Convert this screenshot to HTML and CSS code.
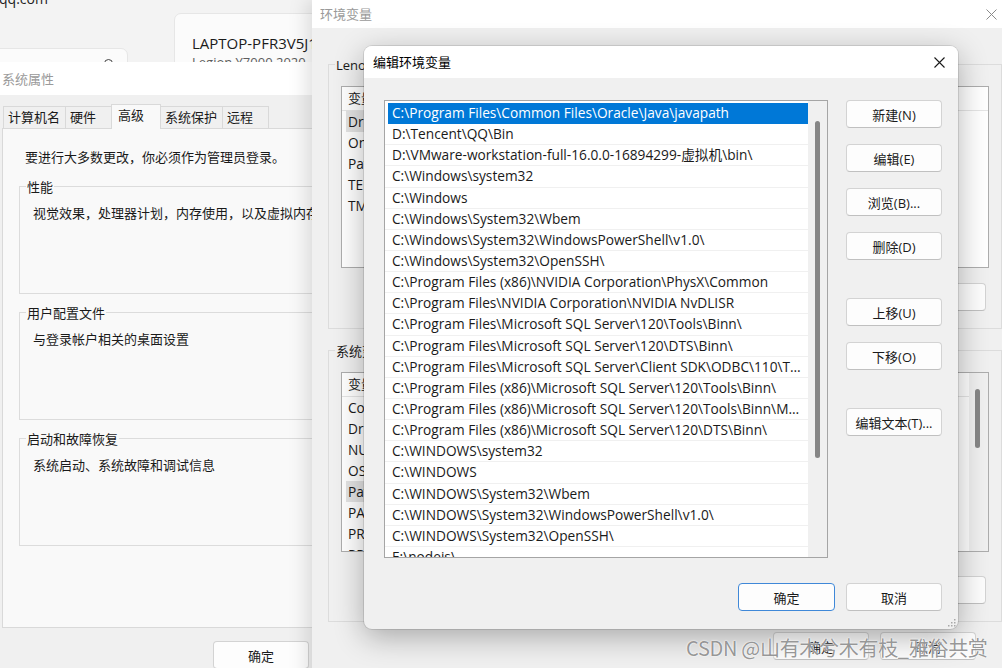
FILE: index.html
```html
<!DOCTYPE html>
<html lang="zh-CN">
<head>
    <meta charset="UTF-8">
    <meta name="viewport" content="width=device-width, initial-scale=1.0">
    <title>编辑环境变量</title>
    <link rel="stylesheet" href="styles.css">
</head>
<body>
<div class="desk">

    <!-- settings app behind everything -->
    <div class="settings">
        <div class="site">qq.com</div>
        <div class="cards">
            <div class="card card-small"><span class="card-icon"></span></div>
            <div class="card card-device">
                <div class="device-name">LAPTOP-PFR3V5J1</div>
                <div class="device-model">Legion Y7000 2020</div>
            </div>
        </div>
    </div>

    <!-- 系统属性 -->
    <div class="win sysprops">
        <div class="titlebar"><span class="title">系统属性</span></div>
        <div class="sys-body">
            <div class="tabs">
                <div class="tab">计算机名</div>
                <div class="tab">硬件</div>
                <div class="tab active">高级</div>
                <div class="tab">系统保护</div>
                <div class="tab">远程</div>
            </div>
            <div class="tabpanel">
                <p class="note">要进行大多数更改，你必须作为管理员登录。</p>
                <div class="group">
                    <div class="group-label">性能</div>
                    <p class="group-text">视觉效果，处理器计划，内存使用，以及虚拟内存</p>
                </div>
                <div class="group">
                    <div class="group-label">用户配置文件</div>
                    <p class="group-text">与登录帐户相关的桌面设置</p>
                </div>
                <div class="group">
                    <div class="group-label">启动和故障恢复</div>
                    <p class="group-text">系统启动、系统故障和调试信息</p>
                </div>
            </div>
            <div class="actions">
                <button class="btn">确定</button>
                <button class="btn">取消</button>
                <button class="btn">应用(A)</button>
            </div>
        </div>
    </div>

    <!-- 环境变量 -->
    <div class="win envvars">
        <div class="titlebar">
            <span class="title">环境变量</span>
            <svg class="close close-dim" width="11" height="11" viewBox="0 0 11 11"><path d="M0.5 0.5L10.5 10.5M10.5 0.5L0.5 10.5" stroke="#8a8a8a" stroke-width="1"/></svg>
        </div>
        <div class="env-body">
            <div class="env-group">
                <div class="group-label">Lenovo 的用户变量(U)</div>
                <div class="varlist varlist-user">
                    <div class="var-table">
                        <div class="var-head"><span class="col-name">变量</span><span class="col-val">值</span></div>
                        <div class="var-row"><span class="col-name"><span class="hl">DriverData</span></span><span class="col-val">C:\Windows\System32\Drivers\DriverData</span></div>
                        <div class="var-row"><span class="col-name">OneDrive</span><span class="col-val">C:\Users\Lenovo\OneDrive</span></div>
                        <div class="var-row"><span class="col-name">Path</span><span class="col-val">C:\Users\Lenovo\AppData\Local\Microsoft</span></div>
                        <div class="var-row"><span class="col-name">TEMP</span><span class="col-val">%USERPROFILE%\AppData\Local\Temp</span></div>
                        <div class="var-row"><span class="col-name">TMP</span><span class="col-val">%USERPROFILE%\AppData\Local\Temp</span></div>
                    </div>
                </div>
                <div class="group-btns">
                    <button class="btn">新建(N)...</button>
                    <button class="btn">编辑(E)...</button>
                    <button class="btn">删除(D)</button>
                </div>
            </div>
            <div class="env-group env-group-sys">
                <div class="group-label">系统变量(S)</div>
                <div class="varlist varlist-sys">
                    <div class="var-table">
                        <div class="var-head"><span class="col-name">变量</span><span class="col-val">值</span></div>
                        <div class="var-row"><span class="col-name">ComSpec</span><span class="col-val">C:\WINDOWS\system32\cmd.exe</span></div>
                        <div class="var-row"><span class="col-name">DriverData</span><span class="col-val">C:\Windows\System32\Drivers</span></div>
                        <div class="var-row"><span class="col-name">NUMBER_OF_PROCESSORS</span><span class="col-val">12</span></div>
                        <div class="var-row"><span class="col-name">OS</span><span class="col-val">Windows_NT</span></div>
                        <div class="var-row"><span class="col-name"><span class="hl">Path</span></span><span class="col-val">C:\Program Files\Common Files</span></div>
                        <div class="var-row"><span class="col-name">PATHEXT</span><span class="col-val">.COM;.EXE;.BAT;.CMD;.VBS</span></div>
                        <div class="var-row"><span class="col-name">PROCESSOR_ARCHITECTURE</span><span class="col-val">AMD64</span></div>
                        <div class="var-row"><span class="col-name">PROCESSOR_IDENTIFIER</span><span class="col-val">Intel64 Family 6</span></div>
                    </div>
                    <div class="vscroll vscroll-sys"><div class="thumb"></div></div>
                </div>
                <div class="group-btns">
                    <button class="btn">新建(W)...</button>
                    <button class="btn">编辑(I)...</button>
                    <button class="btn">删除(L)</button>
                </div>
            </div>
            <div class="env-actions">
                <button class="btn">确定</button>
                <button class="btn">取消</button>
            </div>
        </div>
    </div>

    <!-- 编辑环境变量 -->
    <div class="dialog">
        <div class="titlebar">
            <span class="title">编辑环境变量</span>
            <svg class="close" width="11" height="11" viewBox="0 0 11 11"><path d="M0.5 0.5L10.5 10.5M10.5 0.5L0.5 10.5" stroke="#1a1a1a" stroke-width="1.1"/></svg>
        </div>
        <div class="dlg-body">
            <div class="pathlist">
                <div class="path-rows">
                    <div class="path-row sel">C:\Program Files\Common Files\Oracle\Java\javapath</div>
                    <div class="path-row">D:\Tencent\QQ\Bin</div>
                    <div class="path-row">D:\VMware-workstation-full-16.0.0-16894299-虚拟机\bin\</div>
                    <div class="path-row">C:\Windows\system32</div>
                    <div class="path-row">C:\Windows</div>
                    <div class="path-row">C:\Windows\System32\Wbem</div>
                    <div class="path-row">C:\Windows\System32\WindowsPowerShell\v1.0\</div>
                    <div class="path-row">C:\Windows\System32\OpenSSH\</div>
                    <div class="path-row">C:\Program Files (x86)\NVIDIA Corporation\PhysX\Common</div>
                    <div class="path-row">C:\Program Files\NVIDIA Corporation\NVIDIA NvDLISR</div>
                    <div class="path-row">C:\Program Files\Microsoft SQL Server\120\Tools\Binn\</div>
                    <div class="path-row">C:\Program Files\Microsoft SQL Server\120\DTS\Binn\</div>
                    <div class="path-row">C:\Program Files\Microsoft SQL Server\Client SDK\ODBC\110\Tools\Binn\</div>
                    <div class="path-row">C:\Program Files (x86)\Microsoft SQL Server\120\Tools\Binn\</div>
                    <div class="path-row">C:\Program Files (x86)\Microsoft SQL Server\120\Tools\Binn\ManagementStudio\</div>
                    <div class="path-row">C:\Program Files (x86)\Microsoft SQL Server\120\DTS\Binn\</div>
                    <div class="path-row">C:\WINDOWS\system32</div>
                    <div class="path-row">C:\WINDOWS</div>
                    <div class="path-row">C:\WINDOWS\System32\Wbem</div>
                    <div class="path-row">C:\WINDOWS\System32\WindowsPowerShell\v1.0\</div>
                    <div class="path-row">C:\WINDOWS\System32\OpenSSH\</div>
                    <div class="path-row">E:\nodejs\</div>
                </div>
                <div class="vscroll"><div class="thumb thumb-long"></div></div>
            </div>
            <div class="btn-col">
                <button class="btn">新建(N)</button>
                <button class="btn">编辑(E)</button>
                <button class="btn">浏览(B)...</button>
                <button class="btn">删除(D)</button>
                <button class="btn btn-sep">上移(U)</button>
                <button class="btn">下移(O)</button>
                <button class="btn btn-sep">编辑文本(T)...</button>
            </div>
        </div>
        <div class="dlg-actions">
            <button class="btn btn-default">确定</button>
            <button class="btn">取消</button>
        </div>
        <svg class="grip" width="8" height="8" viewBox="0 0 8 8" fill="#a8a8a8">
            <rect x="6" y="0" width="1.5" height="1.5"/>
            <rect x="3" y="3" width="1.5" height="1.5"/><rect x="6" y="3" width="1.5" height="1.5"/>
            <rect x="0" y="6" width="1.5" height="1.5"/><rect x="3" y="6" width="1.5" height="1.5"/><rect x="6" y="6" width="1.5" height="1.5"/>
        </svg>
    </div>

    <div class="watermark">CSDN @山有木兮木有枝_雅俗共赏</div>
</div>
</body>
</html>
```

FILE: styles.css
```css
* {
    box-sizing: border-box;
}

body {
    margin: 0;
    font-family: "Open Sans", "Noto Sans CJK SC", sans-serif;
    font-size: 13px;
    color: #1a1a1a;
}

.desk {
    position: relative;
    width: 1002px;
    height: 668px;
    overflow: hidden;
    background: #f3f3f3;
}

/* settings app in the back */
.site {
    margin: -10px 0 0 -1px;
    font-size: 14px;
    line-height: 18px;
    color: #222;
}

.cards {
    display: flex;
    align-items: flex-start;
    gap: 46px;
    margin-left: -10px;
}

.card {
    background: #fbfbfb;
    border: 1px solid #e6e6e6;
    border-radius: 7px;
}

.card-small {
    width: 138px;
    height: 60px;
    margin-top: 40px;
    display: flex;
    justify-content: flex-end;
    padding: 10px 14px 0 0;
}

.card-icon {
    width: 9px;
    height: 9px;
    border: 1.5px solid #444;
    border-radius: 50%;
}

.card-device {
    width: 260px;
    height: 80px;
    margin-top: 5px;
    padding: 19px 17px;
}

.device-name {
    font-size: 15px;
    line-height: 20px;
    color: #1b1b1b;
}

.device-model {
    font-size: 13px;
    line-height: 18px;
    color: #5d5d5d;
}

/* windows */
.win {
    position: absolute;
    background: #f0f0f0;
}

.titlebar {
    background: #fff;
    display: flex;
    align-items: center;
    justify-content: space-between;
}

.title {
    font-family: "Noto Sans CJK SC", sans-serif;
    font-size: 13px;
    line-height: 18px;
    color: #9a9a9a;
}

.close {
    display: block;
}

.btn {
    height: 28px;
    width: 96px;
    padding: 0;
    background: #fdfdfd;
    border: 1px solid #d3d3d3;
    border-bottom-color: #c0c0c0;
    border-radius: 4px;
    font-family: "Open Sans", "Noto Sans CJK SC", sans-serif;
    font-size: 13px;
    color: #1a1a1a;
}

.group-label {
    width: fit-content;
    margin: -9px 0 0 -7px;
    padding: 0 1px;
    line-height: 18px;
    font-family: "Open Sans", "Noto Sans CJK SC", sans-serif;
}

/* 系统属性 */
.sysprops {
    left: -8px;
    top: 62px;
    width: 535px;
    height: 620px;
}

.sysprops .titlebar {
    height: 33px;
    padding-left: 10px;
}

.sys-body {
    padding: 9px 10px 0 10px;
}

.tabs {
    display: flex;
    align-items: flex-end;
    height: 24px;
    padding-left: 1px;
}

.tab {
    height: 22px;
    line-height: 20px;
    min-width: 47px;
    padding: 0 5px 0 4px;
    border: 1px solid #d9d9d9;
    border-bottom: none;
    margin-right: -1px;
    background: #f0f0f0;
    font-family: "Noto Sans CJK SC", sans-serif;
}

.tab.active {
    height: 25px;
    min-width: 50px;
    padding-left: 6px;
    margin-bottom: -1px;
    background: #f9f9f9;
    position: relative;
    z-index: 1;
}

.tabpanel {
    height: 500px;
    background: #f9f9f9;
    border: 1px solid #d9d9d9;
    padding: 19px 16px 0 16px;
}

.note {
    margin: 0 0 20px 6px;
    line-height: 18px;
    font-family: "Noto Sans CJK SC", sans-serif;
}

.group {
    height: 108px;
    border: 1px solid #dcdcdc;
    padding: 0 13px;
    margin-bottom: 18px;
}

.group .group-label {
    background: #f9f9f9;
}

.group-text {
    margin: 8px 0 0 0;
    line-height: 18px;
    white-space: nowrap;
    font-family: "Noto Sans CJK SC", sans-serif;
}

.actions {
    display: flex;
    justify-content: flex-end;
    gap: 8px;
    margin-top: 13px;
}

/* 环境变量 */
.envvars {
    left: 312px;
    top: 0;
    width: 700px;
    height: 700px;
    box-shadow: -5px 0 18px rgba(0, 0, 0, 0.13);
}

.envvars .titlebar {
    height: 28px;
    padding: 0 15px 0 8px;
}

.env-body {
    padding: 36px 10px 0 16px;
}

.env-group {
    border: 1px solid #dcdcdc;
    padding: 0 12px 17px 12px;
}

.env-group .group-label {
    background: #f0f0f0;
    margin-left: -6px;
}

.env-group-sys {
    margin-top: 21px;
}

.varlist {
    display: flex;
    margin-top: 12px;
    background: #fff;
    border: 1px solid #adadad;
    overflow: hidden;
    font-size: 13.7px;
}

.varlist-user {
    height: 182px;
}

.varlist-sys {
    height: 180px;
}

.var-table {
    flex: 1;
}

.var-head,
.var-row {
    display: flex;
    white-space: nowrap;
}

.var-head {
    height: 24px;
    line-height: 22px;
    border-bottom: 1px solid #e5e5e5;
    font-size: 13px;
}

.var-head .col-name {
    border-right: 1px solid #e5e5e5;
    font-family: "Noto Sans CJK SC", sans-serif;
}

.var-head .col-val {
    font-family: "Noto Sans CJK SC", sans-serif;
}

.var-row {
    height: 21px;
    line-height: 21px;
    margin-left: 4px;
}

.hl {
    display: inline-block;
    padding: 0 2px;
    background: #e3e3e3;
}

.col-name {
    width: 190px;
    padding-left: 6px;
    overflow: hidden;
}

.var-row .col-name {
    padding-left: 0;
}

.var-row .col-name:not(:has(.hl)) {
    padding-left: 2px;
}

.col-val {
    padding-left: 8px;
}

.group-btns {
    display: flex;
    justify-content: flex-end;
    gap: 10px;
    margin-top: 15px;
    padding-right: 3px;
}

.group-btns .btn {
    width: 108px;
}

.env-group-sys .group-btns {
    margin-top: 24px;
}

.env-actions {
    display: flex;
    justify-content: flex-end;
    gap: 11px;
    margin: 10px 26px 0 0;
}

/* 编辑环境变量 */
.dialog {
    position: absolute;
    left: 364px;
    top: 46px;
    width: 594px;
    height: 583px;
    background: #f0f0f0;
    border-radius: 8px;
    overflow: hidden;
    box-shadow: 0 8px 30px rgba(0, 0, 0, 0.3), 0 0 0 1px rgba(0, 0, 0, 0.1);
}

.dialog .titlebar {
    height: 32px;
    padding: 0 13px 0 9px;
}

.dialog .title {
    color: #000;
}

.dlg-body {
    display: flex;
    gap: 18px;
    padding: 22px 16px 0 20px;
}

.pathlist {
    display: flex;
    width: 444px;
    height: 458px;
    background: #fff;
    border: 1px solid #a5a5a5;
    overflow: hidden;
}

.path-rows {
    flex: 1;
    min-width: 0;
    padding-top: 2px;
}

.path-row {
    height: 21.15px;
    line-height: 20px;
    padding: 0 3px 0 7px;
    border-bottom: 1px solid #f0f0f0;
    font-size: 13.7px;
    white-space: nowrap;
    overflow: hidden;
    text-overflow: ellipsis;
}

.path-row.sel {
    margin-left: 3px;
    padding-left: 4px;
    background: #0078d7;
    border-bottom-color: #0078d7;
    color: #fff;
}

.vscroll {
    width: 19px;
    background: #f0f0f0;
    padding: 20px 0 0 7px;
}

.thumb {
    width: 5px;
    background: #868686;
    border-radius: 3px;
}

.thumb-long {
    height: 337px;
}

.vscroll-sys {
    padding-top: 16px;
    padding-left: 6px;
}

.vscroll-sys .thumb {
    height: 59px;
}

.btn-col {
    display: flex;
    flex-direction: column;
    gap: 16px;
    width: 96px;
}

.btn-sep {
    margin-top: 22px;
}

.dlg-actions {
    display: flex;
    justify-content: flex-end;
    gap: 11px;
    margin-top: 25px;
    padding-right: 16px;
}

.dlg-actions .btn-default {
    width: 97px;
    border: 1px solid #3f88d8;
}

.grip {
    position: absolute;
    right: 2px;
    bottom: 2px;
}

.watermark {
    position: absolute;
    left: 686px;
    top: 634px;
    font-family: "Noto Sans CJK SC", sans-serif;
    font-size: 20px;
    line-height: 28px;
    letter-spacing: -0.3px;
    color: rgba(105, 105, 105, 0.7);
    text-shadow: 0 0 1px #fff, 0 0 2px #fff;
    white-space: nowrap;
}
```
